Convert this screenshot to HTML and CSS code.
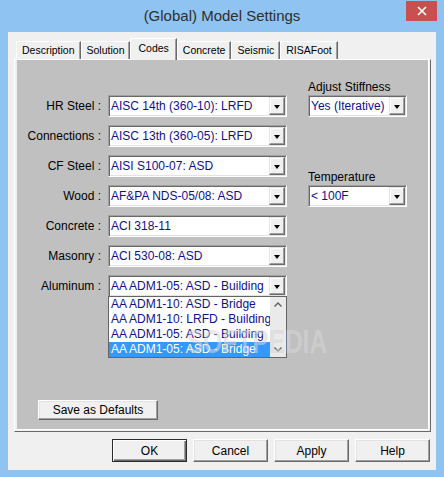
FILE: index.html
```html
<!DOCTYPE html>
<html lang="en">

<head>
    <meta charset="UTF-8">
    <meta name="viewport" content="width=device-width, initial-scale=1.0">
    <title>(Global) Model Settings</title>
    <link rel="stylesheet" href="styles.css">
</head>

<body>
    <div class="dialog">
        <div class="titleBar">
            <div class="title">(Global) Model Settings</div>
            <div class="closeBtn">
                <svg width="10" height="10" viewBox="0 0 10 10">
                    <path d="M1 1L9 9M9 1L1 9" stroke="#fff" stroke-width="1.6" fill="none" />
                </svg>
            </div>
        </div>
        <div class="client">
            <div class="tabBar">
                <div class="tab">Description</div>
                <div class="tab">Solution</div>
                <div class="tab tabActive">Codes</div>
                <div class="tab">Concrete</div>
                <div class="tab">Seismic</div>
                <div class="tab">RISAFoot</div>
            </div>
            <div class="tabPanel">
                <div class="sheet">
                    <div class="form">
                        <div class="codeList">
                            <div class="label">HR Steel :</div>
                            <div class="combo">
                                <div class="comboText">AISC 14th (360-10): LRFD</div>
                                <div class="comboBtn"></div>
                            </div>
                            <div class="label">Connections :</div>
                            <div class="combo">
                                <div class="comboText">AISC 13th (360-05): LRFD</div>
                                <div class="comboBtn"></div>
                            </div>
                            <div class="label">CF Steel :</div>
                            <div class="combo">
                                <div class="comboText">AISI S100-07: ASD</div>
                                <div class="comboBtn"></div>
                            </div>
                            <div class="label">Wood :</div>
                            <div class="combo">
                                <div class="comboText">AF&amp;PA NDS-05/08: ASD</div>
                                <div class="comboBtn"></div>
                            </div>
                            <div class="label">Concrete :</div>
                            <div class="combo">
                                <div class="comboText">ACI 318-11</div>
                                <div class="comboBtn"></div>
                            </div>
                            <div class="label">Masonry :</div>
                            <div class="combo">
                                <div class="comboText">ACI 530-08: ASD</div>
                                <div class="comboBtn"></div>
                            </div>
                            <div class="label">Aluminum :</div>
                            <div class="combo comboOpen">
                                <div class="comboText">AA ADM1-05: ASD - Building</div>
                                <div class="comboBtn"></div>
                                <!-- 展开的下拉列表 -->
                                <div class="dropList">
                                    <div class="dropItems">
                                        <div class="dropItem">AA ADM1-10: ASD - Bridge</div>
                                        <div class="dropItem">AA ADM1-10: LRFD - Building</div>
                                        <div class="dropItem">AA ADM1-05: ASD - Building</div>
                                        <div class="dropItem picked">AA ADM1-05: ASD - Bridge</div>
                                    </div>
                                    <div class="scrollBar">
                                        <svg width="16" height="16" viewBox="0 0 16 16">
                                            <path d="M4.5 9.5L8 6L11.5 9.5" stroke="#606060" stroke-width="1.4" fill="none" />
                                        </svg>
                                        <svg width="16" height="16" viewBox="0 0 16 16">
                                            <path d="M4.5 6.5L8 10L11.5 6.5" stroke="#606060" stroke-width="1.4" fill="none" />
                                        </svg>
                                    </div>
                                </div>
                            </div>
                        </div>
                        <div class="sideList">
                            <div class="sideLabel">Adjust Stiffness</div>
                            <div class="combo">
                                <div class="comboText">Yes (Iterative)</div>
                                <div class="comboBtn"></div>
                            </div>
                            <div class="sideLabel gapTop">Temperature</div>
                            <div class="combo">
                                <div class="comboText">&lt; 100F</div>
                                <div class="comboBtn"></div>
                            </div>
                        </div>
                    </div>
                    <div class="saveRow">
                        <button class="btn saveBtn">Save as Defaults</button>
                    </div>
                    <div class="watermark">SOFTPEDIA</div>
                </div>
            </div>
            <div class="actions">
                <button class="btn okBtn">OK</button>
                <button class="btn">Cancel</button>
                <button class="btn">Apply</button>
                <button class="btn">Help</button>
            </div>
        </div>
    </div>
</body>

</html>
```

FILE: styles.css
```css
* {
    box-sizing: border-box;
}

body {
    margin: 0;
    font-family: "Liberation Sans", Arial, sans-serif;
    font-size: 12px;
    color: #000;
}

.dialog {
    width: 444px;
    height: 477px;
    background-color: #8ec3f2;
}

/* ------------------------标题栏-------------------------- */
.titleBar {
    display: flex;
    height: 32px;
}

.title {
    flex: 1;
    padding: 6px 0 0 38px;
    line-height: 20px;
    font-size: 15px;
    text-align: center;
    color: #2e2e2e;
}

.closeBtn {
    display: flex;
    align-items: center;
    justify-content: center;
    margin: 1px 7px 0 0;
    width: 31px;
    height: 20px;
    background-color: #c75050;
}

.client {
    margin: 0 8px;
    padding-top: 6px;
    height: 438px;
    background-color: #f0f0f0;
}

/* ------------------------选项卡-------------------------- */
.tabBar {
    display: flex;
    align-items: flex-end;
    padding-left: 8px;
    height: 21px;
}

.tab {
    height: 18px;
    padding: 0 5px;
    border-top: 1px solid #fff;
    border-left: 1px solid #fff;
    border-right: 1px solid #696969;
    box-shadow: inset -1px 0 #a0a0a0;
    background-color: #f0f0f0;
    font-size: 10.5px;
    line-height: 17px;
}

.tabActive {
    /* 选中的卡片更高，盖住面板的上边框 */
    position: relative;
    z-index: 1;
    margin-bottom: -1px;
    height: 22px;
    padding: 0 7px;
    line-height: 19px;
}

.tabPanel {
    margin-left: 6px;
    width: 417px;
    padding: 0 1px 1px 2px;
    border: 1px solid;
    border-color: #fff #696969 #696969 #fff;
}

.sheet {
    position: relative;
    display: flex;
    flex-direction: column;
    height: 370px;
    padding: 20px 0 9px;
    border-right: 1px solid #fff;
    border-bottom: 1px solid #fff;
    background-color: #c0c0c0;
}

.form {
    display: flex;
}

.codeList {
    display: grid;
    grid-template-columns: 84px 179px;
    grid-auto-rows: 22px;
    column-gap: 7px;
    row-gap: 8px;
    margin-top: 15px;
}

.label {
    align-self: center;
    text-align: right;
    line-height: 14px;
}

.sideList {
    display: flex;
    flex-direction: column;
    margin-left: 21px;
    width: 99px;
}

.sideLabel {
    height: 15px;
    line-height: 14px;
}

.gapTop {
    margin-top: 53px;
}

/* ------------------------下拉框-------------------------- */
.combo {
    position: relative;
    display: flex;
    height: 22px;
    padding: 1px;
    border: 1px solid;
    border-color: #a0a0a0 #fff #fff #a0a0a0;
    box-shadow: inset 1px 1px #696969, inset -1px -1px #e3e3e3;
}

.comboText {
    flex: 1;
    overflow: hidden;
    padding-left: 1px;
    background-color: #fff;
    white-space: nowrap;
    line-height: 18px;
    color: #10108c;
}

.comboBtn {
    display: flex;
    align-items: center;
    justify-content: center;
    width: 16px;
    border: 1px solid;
    border-color: #e3e3e3 #696969 #696969 #e3e3e3;
    box-shadow: inset -1px -1px #a0a0a0, inset 1px 1px #fff;
    background-color: #f0f0f0;
}

.comboBtn::after {
    content: '';
    margin-top: 1px;
    border-top: 4px solid #000;
    border-left: 3.5px solid transparent;
    border-right: 3.5px solid transparent;
}

.dropList {
    position: absolute;
    z-index: 2;
    top: 100%;
    left: -1px;
    display: flex;
    width: 179px;
    height: 62px;
    border: 1px solid #646464;
    background-color: #fff;
}

.dropItems {
    flex: 1;
    overflow: hidden;
}

.dropItem {
    height: 15px;
    padding-left: 2px;
    white-space: nowrap;
    line-height: 15px;
    color: #10108c;
}

.picked {
    background-color: #3399ff;
    color: #fff;
}

.scrollBar {
    display: flex;
    flex-direction: column;
    justify-content: space-between;
    width: 16px;
    background-color: #eaeaea;
}

/* ------------------------按钮-------------------------- */
.btn {
    height: 23px;
    padding: 0;
    border: 1px solid;
    border-color: #fff #696969 #696969 #fff;
    box-shadow: inset -1px -1px #a0a0a0, inset 1px 1px #e3e3e3;
    background-color: #f0f0f0;
    font-family: inherit;
    font-size: 12px;
    color: #000;
}

.saveRow {
    margin-top: auto;
    padding-left: 21px;
}

.saveBtn {
    width: 120px;
    height: 20px;
}

.actions {
    display: flex;
    justify-content: flex-end;
    gap: 6px;
    margin-top: 7px;
    padding-right: 6px;
}

.actions .btn {
    width: 75px;
}

.okBtn {
    border-color: #2b2b2b;
    box-shadow: inset 1px 1px #fff, inset -1px -1px #696969, inset -2px -2px #a0a0a0;
}

/* 截图上的水印 */
.watermark {
    position: absolute;
    z-index: 3;
    left: 170px;
    top: 262px;
    transform: scaleX(0.72);
    transform-origin: left top;
    pointer-events: none;
    font-size: 34px;
    font-weight: bold;
    color: rgba(215, 215, 215, 0.55);
}
```
